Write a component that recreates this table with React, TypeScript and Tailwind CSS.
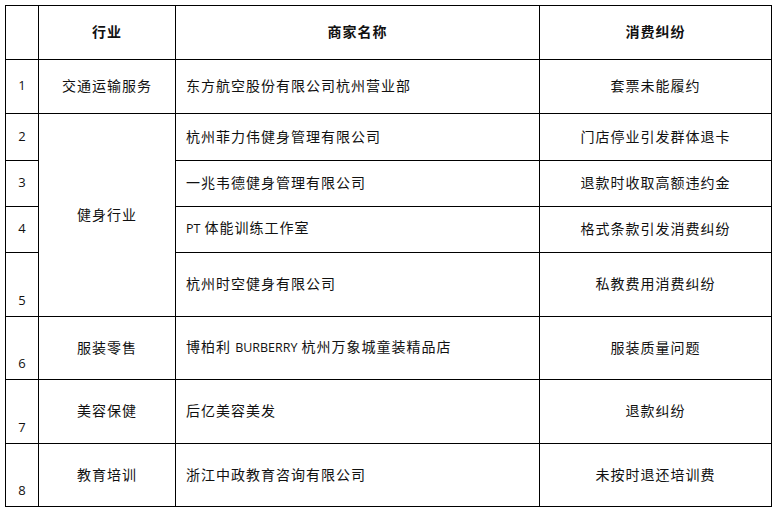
import React from "react";

type Row = {
  no: string;
  industry?: { text: string; span: number };
  merchant: React.ReactNode;
  dispute: string;
  h: string;
  noBottom?: boolean;
};

const Latin = ({ children }: { children: React.ReactNode }) => (
  <span className="font-['Open_Sans'] text-[12.5px] tracking-normal">{children}</span>
);

const rows: Row[] = [
  { no: "1", industry: { text: "交通运输服务", span: 1 }, merchant: "东方航空股份有限公司杭州营业部", dispute: "套票未能履约", h: "h-[54px]" },
  { no: "2", industry: { text: "健身行业", span: 4 }, merchant: "杭州菲力伟健身管理有限公司", dispute: "门店停业引发群体退卡", h: "h-[47px]" },
  { no: "3", merchant: "一兆韦德健身管理有限公司", dispute: "退款时收取高额违约金", h: "h-[46px]" },
  { no: "4", merchant: <><Latin>PT</Latin> 体能训练工作室</>, dispute: "格式条款引发消费纠纷", h: "h-[46px]" },
  { no: "5", merchant: "杭州时空健身有限公司", dispute: "私教费用消费纠纷", h: "h-[64px]", noBottom: true },
  { no: "6", industry: { text: "服装零售", span: 1 }, merchant: <>博柏利 <Latin>BURBERRY</Latin> 杭州万象城童装精品店</>, dispute: "服装质量问题", h: "h-[63px]", noBottom: true },
  { no: "7", industry: { text: "美容保健", span: 1 }, merchant: "后亿美容美发", dispute: "退款纠纷", h: "h-[64px]", noBottom: true },
  { no: "8", industry: { text: "教育培训", span: 1 }, merchant: "浙江中政教育咨询有限公司", dispute: "未按时退还培训费", h: "h-[63px]", noBottom: true },
];

export default function App() {
  return (
    <div className="min-h-[519px] w-[779px] bg-white pl-[5px] pt-[5px] text-[14px] leading-[20px] tracking-[1px] text-[#111] font-['Noto_Sans_CJK_SC','Noto_Sans',sans-serif]">
      <table className="w-[766px] table-fixed border-collapse">
        <colgroup>
          <col className="w-[33px]" />
          <col className="w-[137px]" />
          <col className="w-[364px]" />
          <col className="w-[232px]" />
        </colgroup>
        <thead>
          <tr className="h-[54px]">
            <th className="border border-black pb-[3px]"></th>
            <th className="border border-black pb-[3px] text-center font-bold">行业</th>
            <th className="border border-black pb-[3px] text-center font-bold">商家名称</th>
            <th className="border border-black pb-[3px] text-center font-bold">消费纠纷</th>
          </tr>
        </thead>
        <tbody>
          {rows.map((r) => (
            <tr key={r.no} className={r.h}>
              <td
                className={`border border-black text-center font-['Open_Sans'] text-[13px] tracking-normal ${
                  r.noBottom ? "align-bottom pb-[6px]" : "align-middle pb-[3px]"
                }`}
              >
                {r.no}
              </td>
              {r.industry && (
                <td rowSpan={r.industry.span} className="border border-black pb-[3px] text-center align-middle">
                  {r.industry.text}
                </td>
              )}
              <td className="border border-black pb-[3px] pl-[10px] align-middle">{r.merchant}</td>
              <td className="border border-black pb-[3px] text-center align-middle">{r.dispute}</td>
            </tr>
          ))}
        </tbody>
      </table>
    </div>
  );
}
